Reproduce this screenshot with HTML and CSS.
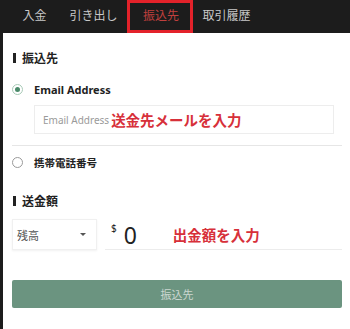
FILE: index.html
```html
<!DOCTYPE html>
<html lang="ja">
<head>
    <meta charset="UTF-8">
    <meta name="viewport" content="width=device-width, initial-scale=1.0">
    <title>振込先</title>
    <link rel="stylesheet" href="styles.css">
</head>
<body>
<div class="tabs">
    <div class="tab">入金</div>
    <div class="tab">引き出し</div>
    <div class="tab active">振込先</div>
    <div class="tab">取引履歴</div>
</div>
<div class="panel">
    <div class="section-title">振込先</div>

    <div class="radio-row">
        <span class="radio checked"></span>
        <span class="radio-label">Email Address</span>
    </div>
    <div class="input-box">
        <span class="placeholder">Email Address</span>
        <span class="note">送金先メールを入力</span>
    </div>
    <div class="divider"></div>
    <div class="radio-row">
        <span class="radio"></span>
        <span class="radio-label jp">携帯電話番号</span>
    </div>

    <div class="section-title second">送金額</div>
    <div class="amount-row">
        <div class="select-box">
            <span>残高</span>
            <span class="caret"></span>
        </div>
        <div class="amount-field">
            <span class="currency">$</span>
            <span class="amount">0</span>
            <span class="note">出金額を入力</span>
        </div>
    </div>

    <button type="button" class="submit-btn">振込先</button>
</div>
</body>
</html>
```

FILE: styles.css
```css
body {
    margin: 0;
    padding: 0;
    background-color: #1c1c1c;
    font-family: "Noto Sans", "Noto Sans CJK JP", sans-serif;
    color: #222;
}
.tabs {
    display: flex;
    height: 33px;
    padding-left: 11px;
    box-sizing: border-box;
}
.tab {
    position: relative;
    padding: 0 11.5px 2px 11.5px;
    font-size: 12px;
    line-height: 31px;
    color: #c8c8c8;
}
.tab.active {
    color: #c0403e;
    padding: 0 12px 2px 14px;
}
.tab.active::after {
    content: "";
    position: absolute;
    top: 0;
    left: -2px;
    right: -2px;
    bottom: 0;
    border: 3px solid #e3222a;
}
.panel {
    margin-left: 3px;
    background: #fff;
    height: 296px;
    padding: 17px 8px 0 10px;
    box-sizing: border-box;
}
.section-title {
    display: flex;
    align-items: center;
    gap: 6px;
    height: 16px;
    font-size: 12px;
    font-weight: bold;
}
.section-title::before {
    content: "";
    width: 3px;
    height: 10px;
    background: #222;
}
.section-title.second {
    margin-top: 21px;
}
.radio-row {
    display: flex;
    align-items: center;
    gap: 11px;
    height: 20px;
    margin-top: 13px;
    margin-left: -1px;
}
.divider + .radio-row {
    margin-top: 6px;
}
.radio {
    width: 9px;
    height: 9px;
    border: 1px solid #9a9a9a;
    border-radius: 50%;
    display: flex;
    align-items: center;
    justify-content: center;
}
.radio.checked {
    border-color: #a9cbb8;
}
.radio.checked::after {
    content: "";
    width: 5px;
    height: 5px;
    border-radius: 50%;
    background: #4a8a6a;
}
.radio-label {
    font-size: 11px;
    font-weight: bold;
}
.radio-label.jp {
    font-size: 10.5px;
}
.input-box {
    display: flex;
    align-items: center;
    gap: 2px;
    height: 29px;
    margin: 6px 8px 0 21px;
    padding-left: 8px;
    border: 1px solid #ededed;
    box-sizing: border-box;
}
.placeholder {
    font-size: 10px;
    color: #9a9a9a;
}
.note {
    font-size: 14.5px;
    font-weight: bold;
    color: #d7303a;
}
.divider {
    height: 1px;
    margin: 11px 0 0 -1px;
    background: #e6e6e6;
}
.amount-row {
    display: flex;
    align-items: stretch;
    gap: 8px;
    margin-top: 10px;
    margin-left: -1px;
    height: 31px;
}
.select-box {
    width: 85px;
    display: flex;
    align-items: center;
    justify-content: space-between;
    padding: 0 10px 0 4px;
    box-sizing: border-box;
    border: 1px solid #f0f0f0;
    box-shadow: 0 1px 2px rgba(0, 0, 0, 0.06);
    font-size: 11px;
    color: #555;
}
.caret {
    width: 0;
    height: 0;
    border-left: 3px solid transparent;
    border-right: 3px solid transparent;
    border-top: 3px solid #555;
}
.amount-field {
    flex: 1;
    display: flex;
    align-items: center;
    padding-left: 6px;
    border-bottom: 1px solid #ececec;
    box-sizing: border-box;
}
.currency {
    font-size: 10px;
    align-self: flex-start;
    margin-top: 2px;
}
.amount {
    font-size: 23px;
    margin-left: 7px;
    width: 42px;
    line-height: 1;
    padding-top: 2px;
}
.amount-field .note {
    margin-left: 7px;
}
.submit-btn {
    display: block;
    width: calc(100% + 1px);
    margin: 30px 0 0 -1px;
    height: 28px;
    border: none;
    border-radius: 2px;
    background: #6b9480;
    color: #cbd7d0;
    font-family: "Noto Sans CJK JP", sans-serif;
    font-size: 11px;
}
```
